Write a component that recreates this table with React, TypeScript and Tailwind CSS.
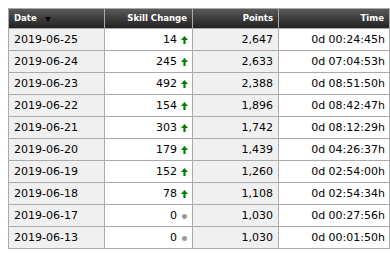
import React from "react";

const rows: [string, number, string, string][] = [
  ["2019-06-25", 14, "2,647", "0d 00:24:45h"],
  ["2019-06-24", 245, "2,633", "0d 07:04:53h"],
  ["2019-06-23", 492, "2,388", "0d 08:51:50h"],
  ["2019-06-22", 154, "1,896", "0d 08:42:47h"],
  ["2019-06-21", 303, "1,742", "0d 08:12:29h"],
  ["2019-06-20", 179, "1,439", "0d 04:26:37h"],
  ["2019-06-19", 152, "1,260", "0d 02:54:00h"],
  ["2019-06-18", 78, "1,108", "0d 02:54:34h"],
  ["2019-06-17", 0, "1,030", "0d 00:27:56h"],
  ["2019-06-13", 0, "1,030", "0d 00:01:50h"],
];

function UpArrow() {
  return (
    <svg width="7" height="8" viewBox="0 0 7 8" className="shrink-0">
      <path d="M3.5 0 L7 4 L4.6 4 L4.6 8 L2.4 8 L2.4 4 L0 4 Z" fill="#008000" />
    </svg>
  );
}

function Dot() {
  return (
    <span className="flex w-[7px] shrink-0 justify-center">
      <span className="block h-[5px] w-[5px] rounded-full bg-[#999]" />
    </span>
  );
}

const hdr =
  "flex h-[19px] items-center bg-gradient-to-b from-[#5a5a5a] to-[#222] px-[5px] text-[9.5px] font-bold text-white";

export default function App() {
  return (
    <div
      className="bg-white p-2"
      style={{ fontFamily: '"DejaVu Sans", Verdana, sans-serif' }}
    >
      <div className="grid w-[382px] grid-cols-[95px_87px_85px_110px] gap-px bg-[#aaa] p-px text-[11px] text-black">
        <div className={hdr} style={{ fontFamily: '"DejaVu Sans Condensed", "DejaVu Sans", sans-serif' }}>
          <span>Date</span>
          <svg width="6" height="5" viewBox="0 0 6 5" className="ml-[8px] mt-[2px]">
            <path d="M0 0 L6 0 L3 5 Z" fill="#000" />
          </svg>
        </div>
        <div className={hdr + " justify-end"} style={{ fontFamily: '"DejaVu Sans Condensed", "DejaVu Sans", sans-serif' }}>
          Skill Change
        </div>
        <div className={hdr + " justify-end"} style={{ fontFamily: '"DejaVu Sans Condensed", "DejaVu Sans", sans-serif' }}>
          Points
        </div>
        <div className={hdr + " justify-end"} style={{ fontFamily: '"DejaVu Sans Condensed", "DejaVu Sans", sans-serif' }}>
          Time
        </div>
        {rows.map(([d, s, p, t]) => (
          <React.Fragment key={d}>
            <div className="flex h-[21px] items-center bg-[#f0f0f0] px-[5px] pt-px">{d}</div>
            <div className="flex h-[21px] items-center justify-end gap-[4px] bg-white px-[4px] pt-px">
              <span>{s}</span>
              {s > 0 ? <UpArrow /> : <Dot />}
            </div>
            <div className="flex h-[21px] items-center justify-end bg-[#f0f0f0] px-[5px] pt-px">{p}</div>
            <div className="flex h-[21px] items-center justify-end bg-white px-[4px] pt-px">{t}</div>
          </React.Fragment>
        ))}
      </div>
    </div>
  );
}
